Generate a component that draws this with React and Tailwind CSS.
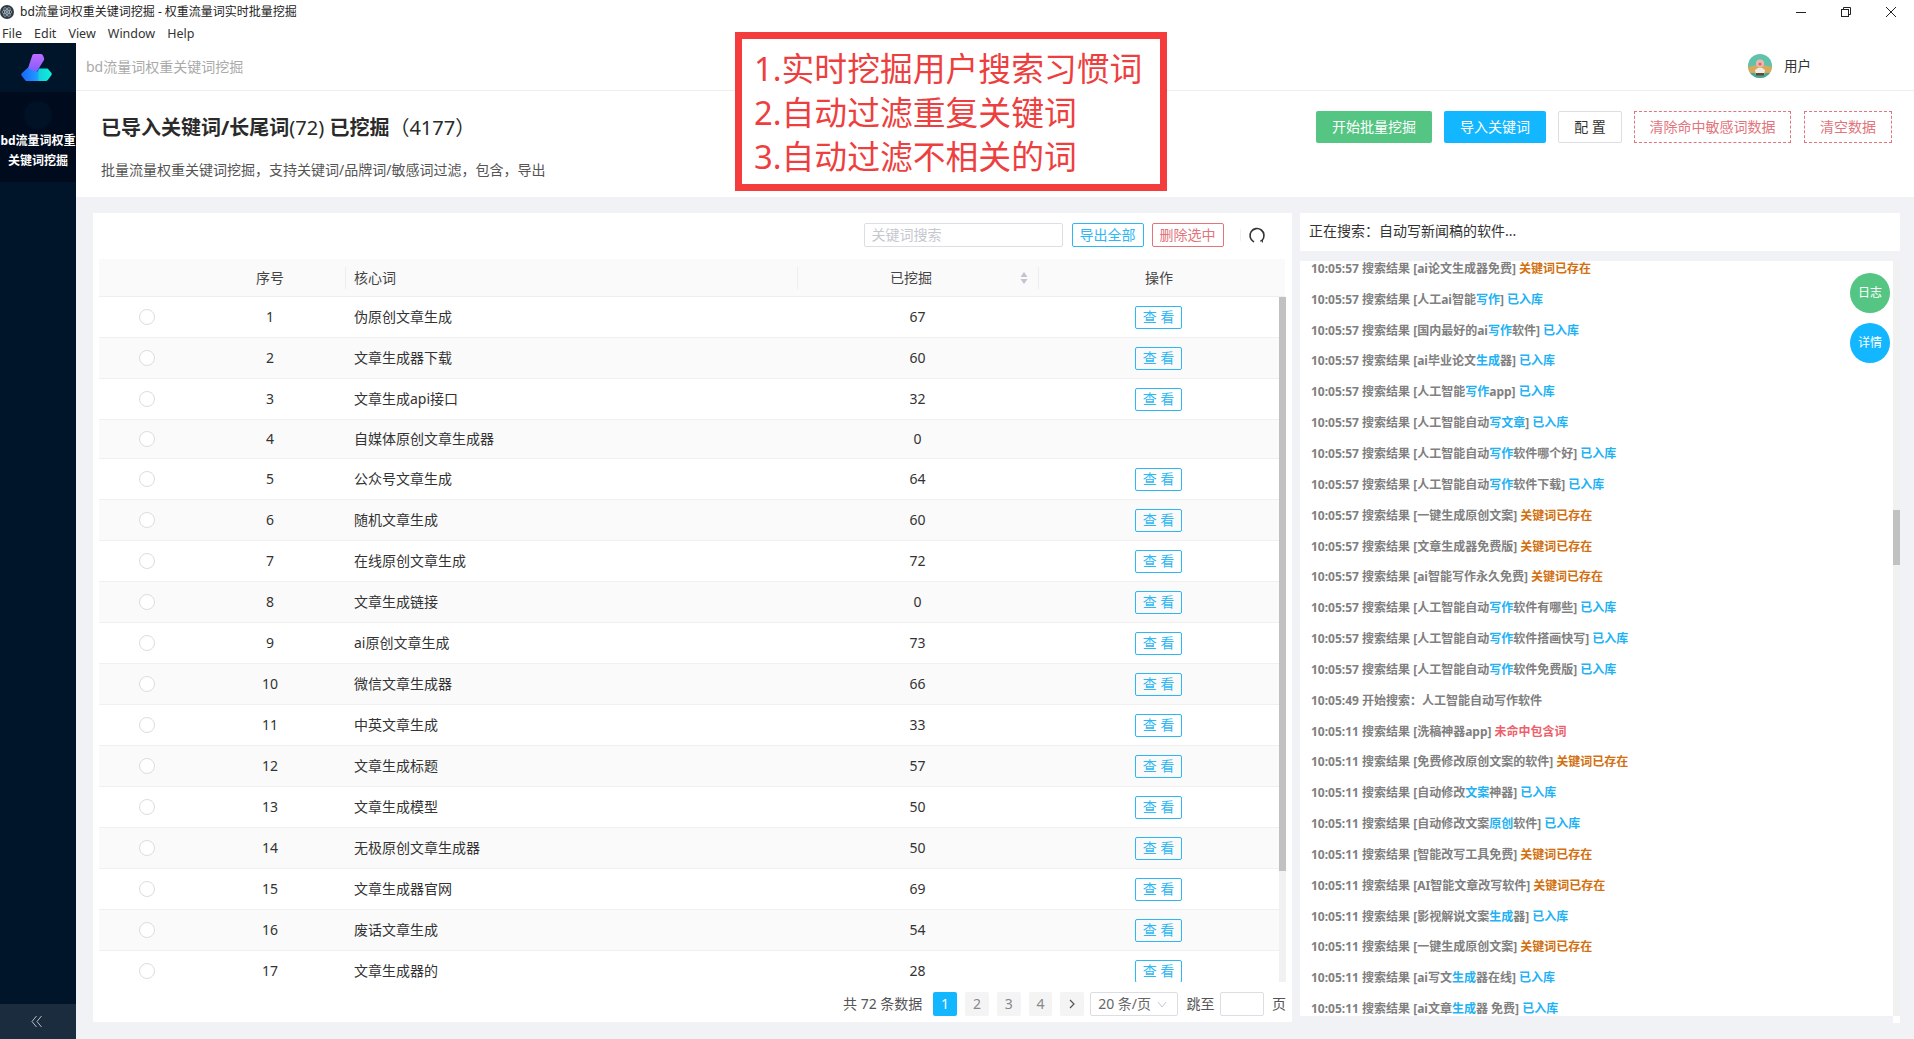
import React from "react";

const rows = [
  [1, "伪原创文章生成", 67, true],
  [2, "文章生成器下载", 60, true],
  [3, "文章生成api接口", 32, true],
  [4, "自媒体原创文章生成器", 0, false],
  [5, "公众号文章生成", 64, true],
  [6, "随机文章生成", 60, true],
  [7, "在线原创文章生成", 72, true],
  [8, "文章生成链接", 0, true],
  [9, "ai原创文章生成", 73, true],
  [10, "微信文章生成器", 66, true],
  [11, "中英文章生成", 33, true],
  [12, "文章生成标题", 57, true],
  [13, "文章生成模型", 50, true],
  [14, "无极原创文章生成器", 50, true],
  [15, "文章生成器官网", 69, true],
  [16, "废话文章生成", 54, true],
  [17, "文章生成器的", 28, true],
];

const E = "关键词已存在";
const K = "已入库";
const M = "未命中包含词";
const logs = [
  ["10:05:57", "ai论文生成器免费", E],
  ["10:05:57", "人工ai智能|写作|", K],
  ["10:05:57", "国内最好的ai|写作|软件", K],
  ["10:05:57", "ai毕业论文|生成|器", K],
  ["10:05:57", "人工智能|写作|app", K],
  ["10:05:57", "人工智能自动|写文章|", K],
  ["10:05:57", "人工智能自动|写作|软件哪个好", K],
  ["10:05:57", "人工智能自动|写作|软件下载", K],
  ["10:05:57", "一键生成原创文案", E],
  ["10:05:57", "文章生成器免费版", E],
  ["10:05:57", "ai智能写作永久免费", E],
  ["10:05:57", "人工智能自动|写作|软件有哪些", K],
  ["10:05:57", "人工智能自动|写作|软件搭画快写", K],
  ["10:05:57", "人工智能自动|写作|软件免费版", K],
  ["10:05:49", null, "开始搜索：人工智能自动写作软件"],
  ["10:05:11", "洗稿神器app", M],
  ["10:05:11", "免费修改原创文案的软件", E],
  ["10:05:11", "自动修改|文案|神器", K],
  ["10:05:11", "自动修改文案|原创|软件", K],
  ["10:05:11", "智能改写工具免费", E],
  ["10:05:11", "AI智能文章改写软件", E],
  ["10:05:11", "影视解说文案|生成|器", K],
  ["10:05:11", "一键生成原创文案", E],
  ["10:05:11", "ai写文|生成|器在线", K],
  ["10:05:11", "ai文章|生成|器 免费", K],
];

function Status({ s }) {
  if (s === E) return <span className="text-[#d2700f]">{s}</span>;
  if (s === K) return <span className="text-[#1fb2f5]">{s}</span>;
  return <span className="text-[#ee5f6c]">{s}</span>;
}

function LogRow({ time, kw, status }) {
  if (kw === null) {
    return (
      <div className="h-[30.85px] flex items-center whitespace-pre font-bold text-[12px] leading-[16px] text-[#808080]">
        {time} {status}
      </div>
    );
  }
  const parts = kw.split("|");
  return (
    <div className="h-[30.85px] flex items-center whitespace-pre font-bold text-[12px] leading-[16px] text-[#808080]">
      <span>
        {time} 搜索结果 [{parts[0]}
        {parts[1] ? <span className="text-[#1fb2f5]">{parts[1]}</span> : null}
        {parts[2] || ""}] <Status s={status} />
      </span>
    </div>
  );
}

function Logo() {
  return (
    <svg width="34" height="30" viewBox="0 0 34 30">
      <defs>
        <linearGradient id="lgTop" x1="0" y1="0" x2="0" y2="1">
          <stop offset="0" stopColor="#c06cff" />
          <stop offset="1" stopColor="#7a5cff" />
        </linearGradient>
        <linearGradient id="lgBot" x1="0" y1="0" x2="1" y2="0">
          <stop offset="0" stopColor="#1e63ff" />
          <stop offset="0.52" stopColor="#1e9bff" />
          <stop offset="0.6" stopColor="#12d2dc" />
          <stop offset="1" stopColor="#0ff0dc" />
        </linearGradient>
      </defs>
      <path d="M12.5 1.8 Q13 1 14 1 H21 Q22.5 1 23 2.5 L24 5 Q24.3 6 24 7 L16 20 L7 18 Z" fill="url(#lgTop)" />
      <path d="M7.5 15 L17 19 L19 15.5 H27 Q28 15.5 28.5 16.5 L31.5 20 Q32 21 31.5 22 L27.8 27 Q27 28 26 28 H6.5 Q5.5 28 5 27 L1.5 22.5 Q1 21.5 1.5 20.5 Z" fill="url(#lgBot)" />
    </svg>
  );
}

function AppIcon() {
  return (
    <svg width="14" height="14" viewBox="0 0 14 14">
      <circle cx="7" cy="7" r="7" fill="#2f3a45" />
      <g fill="none" stroke="#aebbc6" strokeWidth="0.7">
        <ellipse cx="7" cy="7" rx="5" ry="2" />
        <ellipse cx="7" cy="7" rx="5" ry="2" transform="rotate(60 7 7)" />
        <ellipse cx="7" cy="7" rx="5" ry="2" transform="rotate(120 7 7)" />
      </g>
      <circle cx="7" cy="7" r="1" fill="#aebbc6" />
    </svg>
  );
}

function Avatar() {
  return (
    <svg width="24" height="24" viewBox="0 0 24 24">
      <defs>
        <clipPath id="av">
          <circle cx="12" cy="12" r="12" />
        </clipPath>
      </defs>
      <g clipPath="url(#av)">
        <rect width="24" height="24" fill="#5fc2aa" />
        <path d="M0 13 Q12 9 24 13 L24 20 L0 20 Z" fill="#d7a95c" />
        <rect y="19" width="24" height="5" fill="#4aa68f" />
        <path d="M7 16 Q12 11 17 16 L16 21 L8 21 Z" fill="#f3ece4" />
        <circle cx="12" cy="9.5" r="4" fill="#eeb6ae" />
        <circle cx="12" cy="10" r="1.5" fill="#d8665e" />
        <rect x="8" y="19" width="8" height="2.5" fill="#5a4a3c" />
      </g>
    </svg>
  );
}

function Refresh() {
  return (
    <svg width="18" height="18" viewBox="0 0 18 18" fill="none" stroke="#333" strokeWidth="1.6" strokeLinecap="round">
      <path d="M5.5 15.6 A7 7 0 1 1 14.2 14.2" />
      <path d="M14.2 14.2 L12.6 15 M14.2 14.2 L14.4 16" strokeWidth="1.2" />
    </svg>
  );
}

export default function App() {
  return (
    <div className="relative w-[1914px] h-[1039px] overflow-hidden bg-white text-[#333] font-['Noto_Sans','Noto_Sans_CJK_SC',sans-serif]">
      {/* title bar */}
      <div className="h-[22px] flex items-center relative">
        <div className="flex items-center gap-[6px] pt-[2px]">
          <AppIcon />
          <span className="text-[12px] text-[#222]">bd流量词权重关键词挖掘 - 权重流量词实时批量挖掘</span>
        </div>
        <div className="ml-auto flex items-center gap-[35px] pr-[18px] pt-[1px]">
          <svg width="10" height="10" viewBox="0 0 10 10" stroke="#222" fill="none">
            <path d="M0 5.5 H10" />
          </svg>
          <svg width="10" height="10" viewBox="0 0 10 10" stroke="#222" fill="none">
            <rect x="0.5" y="2.5" width="7" height="7" />
            <path d="M2.5 2.5 V0.5 H9.5 V7.5 H7.5" />
          </svg>
          <svg width="10" height="10" viewBox="0 0 10 10" stroke="#222" fill="none">
            <path d="M0 0 L10 10 M10 0 L0 10" />
          </svg>
        </div>
      </div>
      {/* menu */}
      <div className="h-[21px] flex items-center gap-[12px] pl-[2px] pt-[3px] text-[12.5px] leading-[16px] text-[#333]">
        <span>File</span>
        <span>Edit</span>
        <span>View</span>
        <span>Window</span>
        <span>Help</span>
      </div>

      <div className="flex h-[996px]">
        {/* sidebar */}
        <aside className="w-[76px] bg-[#001529] flex flex-col">
          <div className="h-[49px] flex items-center justify-center pr-[2px]">
            <Logo />
          </div>
          <div className="h-[90px] bg-[#000c1e] flex flex-col items-center pt-[9px]">
            <div className="w-[28px] h-[28px] rounded-full bg-[#011126]" />
            <div className="mt-[2px] w-[76px] text-center text-[12px] leading-[20px] font-bold text-white break-all">
              bd流量词权重
              <br />
              关键词挖掘
            </div>
          </div>
          <div className="flex-1" />
          <div className="h-[35px] bg-[#1b2c3f] flex items-center justify-center pr-[3px]">
            <svg width="12" height="13" viewBox="0 0 12 13" fill="none" stroke="#b6bec7" strokeWidth="1">
              <path d="M5.5 1 L1 6.5 L5.5 12 M10.5 1 L6 6.5 L10.5 12" />
            </svg>
          </div>
        </aside>

        {/* main */}
        <main className="flex-1 flex flex-col min-w-0">
          <header className="h-[48px] border-b border-[#eeeeee] flex items-center pl-[10px] pr-[100px] pb-[1px]">
            <span className="text-[14px] text-[#aaaaaa]">bd流量词权重关键词挖掘</span>
            <div className="ml-auto flex items-center gap-[12px] pr-[3px]">
              <Avatar />
              <span className="text-[13.5px] text-[#333]">用户</span>
            </div>
          </header>

          <section className="h-[106px] flex justify-between pl-[25px] pr-[22px]">
            <div>
              <h1 className="mt-[21px] h-[32px] leading-[32px] text-[20px] font-bold text-[#2a2a2a] whitespace-pre">
                已导入关键词/长尾词<span className="font-normal">(72)</span> 已挖掘<span className="font-normal">（4177）</span>
              </h1>
              <p className="mt-[16px] text-[14px] leading-[20px] text-[#555]">
                批量流量权重关键词挖掘，支持关键词/品牌词/敏感词过滤，包含，导出
              </p>
            </div>
            <div className="mt-[20px] flex gap-[12px] h-[32px] text-[14px] leading-[20px]">
              <button className="w-[116px] rounded-[2px] bg-[#54c582] text-white">开始批量挖掘</button>
              <button className="w-[102px] rounded-[2px] bg-[#12b7ff] text-white">导入关键词</button>
              <button className="w-[64px] rounded-[2px] border border-[#dcdee2] text-[#333] whitespace-pre">配 置</button>
              <button className="w-[157px] border border-dashed border-[#e2747c] text-[#e2747c]">清除命中敏感词数据</button>
              <button className="ml-px w-[88px] border border-dashed border-[#e2747c] text-[#e2747c]">清空数据</button>
            </div>
          </section>

          <section className="flex-1 bg-[#f0f2f5] flex items-start pt-[16px] pl-[17px] gap-[8px]">
            {/* table card */}
            <div className="w-[1199px] h-[809px] bg-white px-[6px] flex flex-col">
              <div className="mt-[10px] h-[24px] flex items-center text-[14px] leading-[20px]">
                <div className="ml-[764.5px] w-[199px] h-[24px] border border-[#dcdee2] rounded-[2px] flex items-center pl-[7px] text-[#c5c8ce]">
                  关键词搜索
                </div>
                <button className="ml-[9px] w-[72px] h-[24px] rounded-[2px] border border-[#2db7f5] text-[#2db7f5]">导出全部</button>
                <button className="ml-[8px] w-[72px] h-[24px] rounded-[2px] border border-[#e2747c] text-[#e2747c]">删除选中</button>
                <div className="ml-[16px] w-px h-[12px] bg-[#f0f0f0]" />
                <div className="ml-[7px] flex items-center">
                  <Refresh />
                </div>
              </div>

              <div className="mt-[12px] h-[38px] w-[1186px] bg-[#fafafa] border-b border-[#eeeeee] flex items-center text-[14px] leading-[20px] text-[#444]">
                <div className="w-[96px]" />
                <div className="w-[150px] text-center">序号</div>
                <div className="w-[452px] h-[22px] leading-[22px] border-l border-[#eeeeee] pl-[8px]">核心词</div>
                <div className="relative w-[241px] h-[22px] leading-[22px] border-l border-[#eeeeee] text-center pr-[14px]">
                  已挖掘
                  <svg className="absolute right-[10px] top-[5px]" width="8" height="12" viewBox="0 0 8 12" fill="#c0c4cc">
                    <path d="M4 0 L7.5 5 H0.5 Z M4 12 L0.5 7 H7.5 Z" />
                  </svg>
                </div>
                <div className="w-[241px] h-[22px] leading-[22px] border-l border-[#eeeeee] text-center">操作</div>
              </div>

              <div className="h-[685px] flex overflow-hidden w-[1187px]">
                <div className="w-[1180px] overflow-hidden">
                  {rows.map(([n, name, count, hasBtn]) => (
                    <div
                      key={n}
                      className={
                        "flex items-center border-b border-[#f0f0f0] text-[14px] leading-[20px] text-[#333] " +
                        (hasBtn ? "h-[41px] " : "h-[39px] ") +
                        (n % 2 === 0 ? "bg-[#fafafa]" : "bg-white")
                      }
                    >
                      <div className="w-[96px] flex justify-center">
                        <div className="w-[16px] h-[16px] rounded-full border border-[#dddddd] bg-white" />
                      </div>
                      <div className="w-[150px] text-center">{n}</div>
                      <div className="w-[452px] pl-[9px]">{name}</div>
                      <div className="w-[241px] text-center">{count}</div>
                      <div className="w-[241px] flex justify-center">
                        {hasBtn ? (
                          <button className="w-[47px] h-[23px] rounded-[2px] border border-[#2db7f5] text-[#2db7f5] whitespace-pre leading-[20px]">
                            查 看
                          </button>
                        ) : null}
                      </div>
                    </div>
                  ))}
                </div>
                <div className="w-[7px] h-full bg-[#f1f1f1]">
                  <div className="h-[574px] bg-[#c1c1c1]" />
                </div>
              </div>

              <div className="mt-[10px] h-[24px] flex items-center gap-[8px] text-[14px] leading-[20px] text-[#555] whitespace-pre">
                <span className="ml-[744px] w-[83px]">共 72 条数据</span>
                <span className="w-[24px] h-[24px] rounded-[2px] bg-[#12b7ff] text-white flex items-center justify-center">1</span>
                <span className="w-[24px] h-[24px] rounded-[2px] bg-[#f4f4f5] text-[#888] flex items-center justify-center">2</span>
                <span className="w-[24px] h-[24px] rounded-[2px] bg-[#f4f4f5] text-[#888] flex items-center justify-center">3</span>
                <span className="w-[24px] h-[24px] rounded-[2px] bg-[#f4f4f5] text-[#888] flex items-center justify-center">4</span>
                <span className="w-[24px] h-[24px] rounded-[2px] bg-[#f4f4f5] flex items-center justify-center mr-[-2px]">
                  <svg width="10" height="10" viewBox="0 0 10 10" fill="none" stroke="#555" strokeWidth="1.2">
                    <path d="M3 1 L7 5 L3 9" />
                  </svg>
                </span>
                <span className="w-[89px] h-[24px] border border-[#dcdee2] rounded-[2px] flex items-center pl-[7px] text-[#666]">
                  20 条/页
                  <svg className="ml-[6px]" width="10" height="10" viewBox="0 0 10 10" fill="none" stroke="#c5c8ce">
                    <path d="M1 3 L5 8 L9 3" />
                  </svg>
                </span>
                <span>跳至</span>
                <span className="-ml-[2px] w-[44px] h-[24px] border border-[#dcdee2] rounded-[2px]" />
                <span>页</span>
              </div>
            </div>

            {/* log panel */}
            <div className="w-[600px] flex flex-col relative">
              <div className="h-[38px] bg-white flex items-center pl-[9px] pb-[2px] text-[14px] leading-[20px] text-[#333]">
                正在搜索：自动写新闻稿的软件...
              </div>
              <div className="mt-[10px] h-[762px] flex">
                <div className="w-[593px] h-[755px] bg-white overflow-hidden pl-[11px]">
                  <div className="-mt-[7.5px]">
                    {logs.map(([t, kw, s], i) => (
                      <LogRow key={i} time={t} kw={kw} status={s} />
                    ))}
                  </div>
                </div>
                <div className="w-[7px] h-[762px] flex flex-col">
                  <div className="h-[755px] bg-[#f1f1f1] overflow-hidden">
                    <div className="mt-[249px] h-[55px] bg-[#c1c1c1]" />
                  </div>
                  <div className="h-[7px] bg-white" />
                </div>
              </div>
              {/* floating buttons */}
              <div className="absolute left-[550px] top-[60px] w-[40px] h-[40px] rounded-full bg-[#54c582] text-white text-[12px] flex items-center justify-center">
                日志
              </div>
              <div className="absolute left-[550px] top-[110px] w-[40px] h-[40px] rounded-full bg-[#12b7ff] text-white text-[12px] flex items-center justify-center">
                详情
              </div>
            </div>
          </section>
        </main>
      </div>

      {/* annotation overlay */}
      <div className="absolute left-[735px] top-[32px] w-[432px] h-[159px] border-[7px] border-[#f43c3c] bg-white pl-[12px] pt-[8px] text-[32.8px] leading-[44px] text-[#ee3f40] whitespace-pre">
        <div>1.实时挖掘用户搜索习惯词</div>
        <div>2.自动过滤重复关键词</div>
        <div>3.自动过滤不相关的词</div>
      </div>
    </div>
  );
}
